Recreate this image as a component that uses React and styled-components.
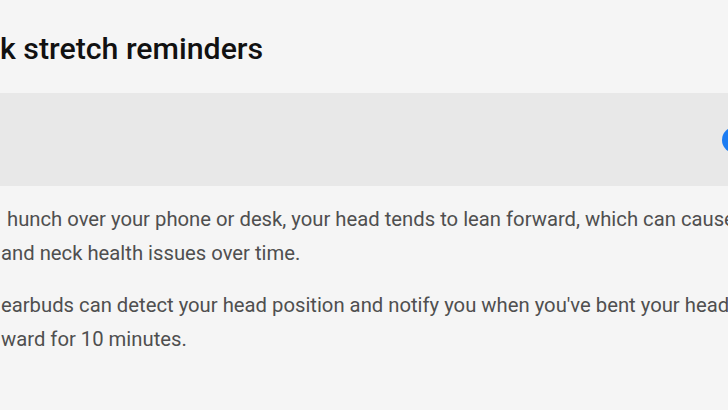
import React from 'react'
import styled, { createGlobalStyle } from 'styled-components'

const GlobalStyle = createGlobalStyle`
  html, body {
    margin: 0;
    padding: 0;
    background: #f5f5f5;
    overflow: hidden;
  }
  body {
    font-family: Roboto, "Liberation Sans", sans-serif;
  }
`

const Page = styled.div`
  width: 728px;
  height: 410px;
  display: flex;
  flex-direction: column;
  background: #f5f5f5;
`

const Title = styled.h1`
  margin: 0;
  padding: 31px 0 0 0;
  height: 93px;
  flex-shrink: 0;
  box-sizing: border-box;
  font-size: 30.3px;
  font-weight: 500;
  line-height: 36px;
  color: #111;
  white-space: nowrap;
`

const SwitchBar = styled.div`
  width: 800px;
  height: 93px;
  flex-shrink: 0;
  display: flex;
  align-items: center;
  justify-content: flex-end;
  padding-right: 32px;
  box-sizing: border-box;
  background: #e8e8e8;
`

const Track = styled.div`
  width: 46px;
  height: 26px;
  border-radius: 13px;
  background: ${p => (p.on ? '#1c7cf2' : '#b5b5b5')};
  display: flex;
  align-items: center;
  justify-content: ${p => (p.on ? 'flex-end' : 'flex-start')};
  padding: 0 4px;
  box-sizing: border-box;
`

const Thumb = styled.div`
  width: 18px;
  height: 18px;
  border-radius: 50%;
  background: #fff;
`

const Body = styled.div`
  display: flex;
  flex-direction: column;
  gap: 18px;
  padding: 16px 0 0 1px;
`

const Para = styled.p`
  margin: 0;
  font-size: 20.25px;
  line-height: 34px;
  color: #4f4f4f;
  white-space: nowrap;
  text-indent: ${p => p.indent || 0}px;
`

export default function App() {
  return (
    <Page>
      <GlobalStyle />
      <Title>k stretch reminders</Title>
      <SwitchBar>
        <Track on>
          <Thumb />
        </Track>
      </SwitchBar>
      <Body>
        <Para indent={6}>
          hunch over your phone or desk, your head tends to lean forward, which can cause
          <br />
          and neck health issues over time.
        </Para>
        <Para>
          earbuds can detect your head position and notify you when you've bent your head
          <br />
          ward for 10 minutes.
        </Para>
      </Body>
    </Page>
  )
}
